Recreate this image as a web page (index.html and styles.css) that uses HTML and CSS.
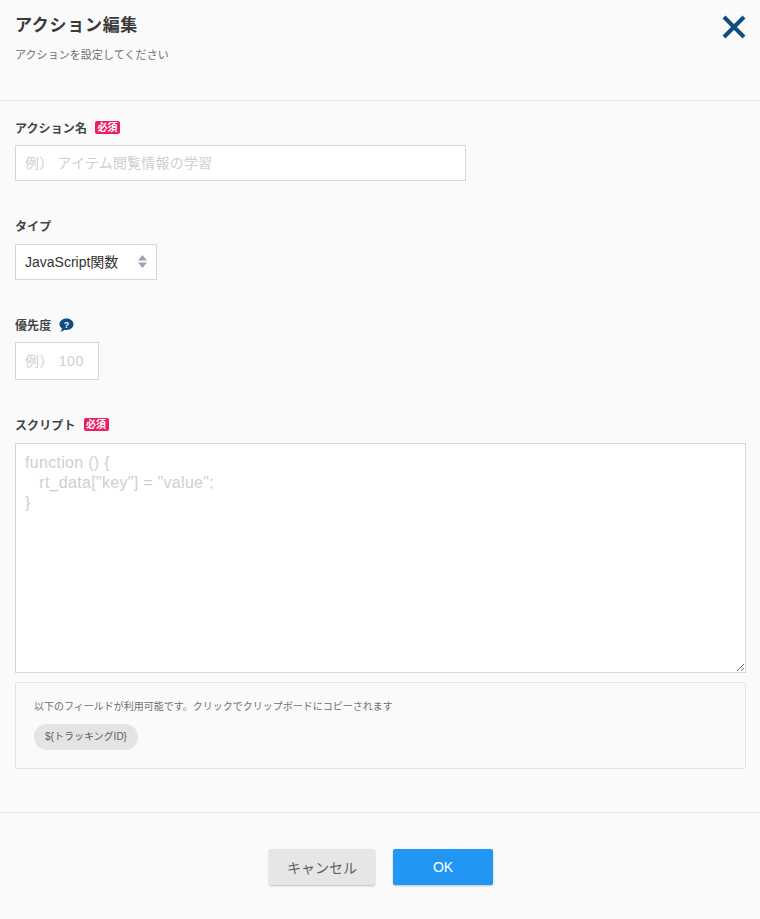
FILE: index.html
```html
<!DOCTYPE html>
<html lang="ja">
<head>
    <meta charset="UTF-8">
    <title>アクション編集</title>
    <link rel="stylesheet" href="styles.css">
</head>
<body>
    <div class="modal">
        <header class="modal-header">
            <div>
                <h1>アクション編集</h1>
                <p class="subtitle">アクションを設定してください</p>
            </div>
            <button class="close-btn" aria-label="閉じる">
                <svg width="26" height="26" viewBox="0 0 26 26">
                    <path d="M3 3 L23 23 M23 3 L3 23" stroke="#0f4c81" stroke-width="4" fill="none"/>
                </svg>
            </button>
        </header>

        <div class="modal-body">
            <div class="field field-name">
                <label class="field-label">アクション名 <span class="required">必須</span></label>
                <input class="input input-name" type="text" placeholder="例） アイテム閲覧情報の学習">
            </div>

            <div class="field field-type">
                <label class="field-label">タイプ</label>
                <div class="select-wrap">
                    <select class="input select">
                        <option>JavaScript関数</option>
                    </select>
                    <svg class="select-arrows" width="9" height="13" viewBox="0 0 9 13">
                        <path d="M4.5 0 L9 5.5 L0 5.5 Z M0 7.5 L9 7.5 L4.5 13 Z" fill="#9aa5b1"/>
                    </svg>
                </div>
            </div>

            <div class="field field-priority">
                <label class="field-label">優先度
                    <svg class="help-icon" width="15" height="14" viewBox="0 0 15 14">
                        <path d="M7.5 0.5 C11.4 0.5 14.5 3 14.5 6.2 C14.5 9.4 11.4 11.9 7.5 11.9 C6.8 11.9 6.2 11.8 5.6 11.7 C4.6 12.8 3 13.5 1.5 13.5 C2.4 12.6 2.9 11.5 3 10.4 C1.4 9.4 0.5 7.9 0.5 6.2 C0.5 3 3.6 0.5 7.5 0.5 Z" fill="#0f4c81"/>
                        <text x="7.5" y="9.6" class="help-mark">?</text>
                    </svg>
                </label>
                <input class="input input-priority" type="text" placeholder="例） 100">
            </div>

            <div class="field field-script">
                <label class="field-label">スクリプト <span class="required">必須</span></label>
                <textarea class="input textarea" placeholder="function () {
   rt_data[&quot;key&quot;] = &quot;value&quot;;
}"></textarea>
            </div>

            <div class="fields-box">
                <p>以下のフィールドが利用可能です。クリックでクリップボードにコピーされます</p>
                <span class="chip">${トラッキングID}</span>
            </div>
        </div>

        <footer class="modal-footer">
            <button class="btn btn-cancel">キャンセル</button>
            <button class="btn btn-ok">OK</button>
        </footer>
    </div>
</body>
</html>
```

FILE: styles.css
```css
* {
    box-sizing: border-box;
}
body {
    margin: 0;
    background-color: #fafafa;
    color: #333;
    font-family: 'Liberation Sans', 'Noto Sans CJK JP', sans-serif;
    overflow: hidden;
}
.modal {
    width: 760px;
    height: 919px;
}
.modal-header {
    display: flex;
    justify-content: space-between;
    align-items: flex-start;
    height: 101px;
    padding: 14px 13px 0 15px;
    border-bottom: 1px solid #e4e4e4;
}
h1 {
    margin: 0;
    font-size: 17px;
    line-height: 24px;
    font-weight: 700;
    letter-spacing: 0.7px;
    color: #3a3a3a;
}
.subtitle {
    margin: 9px 0 0;
    font-size: 11px;
    line-height: 16px;
    letter-spacing: 0.07px;
    color: #707070;
}
.close-btn {
    padding: 0;
    border: none;
    background: none;
    cursor: pointer;
}
.modal-body {
    padding: 19px 14px 0 15px;
}
.field-label {
    display: flex;
    align-items: center;
    gap: 8px;
    height: 15px;
    font-size: 12px;
    font-weight: 700;
    letter-spacing: 0.1px;
    color: #444;
}
.required {
    display: inline-block;
    padding: 0 2.5px;
    height: 13px;
    line-height: 13px;
    font-size: 10px;
    font-weight: 700;
    letter-spacing: 0;
    color: #fff;
    background-color: #e91e63;
    border-radius: 2px;
}
.input {
    display: block;
    border: 1px solid #d6d6d6;
    background-color: #fff;
    font-family: inherit;
    font-size: 14px;
    color: #333;
    padding: 0 9px;
    border-radius: 0;
    outline: none;
}
.input::placeholder {
    color: #cfcfcf;
    opacity: 1;
}
.field-name .input {
    margin-top: 10px;
}
.input-name {
    width: 451px;
    height: 36px;
    letter-spacing: 0.2px;
}
.field-type {
    margin-top: 37px;
}
.select-wrap {
    position: relative;
    width: 142px;
    margin-top: 11px;
}
.select {
    width: 100%;
    height: 36px;
    appearance: none;
}
.select-arrows {
    position: absolute;
    top: 11px;
    right: 10px;
}
.field-priority {
    margin-top: 37px;
}
.help-mark {
    font-size: 9px;
    font-weight: 700;
    fill: #fff;
    text-anchor: middle;
}
.input-priority {
    width: 84px;
    height: 38px;
    margin-top: 10px;
    letter-spacing: 0.6px;
}
.field-script {
    margin-top: 37px;
}
.textarea {
    width: 731px;
    height: 230px;
    margin-top: 11px;
    padding: 9px;
    font-size: 16px;
    line-height: 20px;
    letter-spacing: 0.3px;
}
.fields-box {
    width: 731px;
    height: 87px;
    margin-top: 9px;
    padding: 17px 18px;
    border: 1px solid #e4e4e4;
    border-radius: 2px;
}
.fields-box p {
    margin: 0;
    font-size: 10px;
    line-height: 14px;
    color: #707070;
}
.chip {
    display: inline-block;
    height: 26px;
    margin-top: 10px;
    padding: 0 11px;
    line-height: 26px;
    font-size: 10px;
    color: #606060;
    background-color: #e4e4e4;
    border-radius: 13px;
}
.modal-footer {
    display: flex;
    justify-content: center;
    gap: 18px;
    margin-top: 43px;
    padding: 36px 0 0 2px;
    border-top: 1px solid #e4e4e4;
}
.btn {
    height: 36px;
    border: none;
    border-radius: 2px;
    font-family: inherit;
    font-size: 14px;
    cursor: pointer;
    box-shadow: 0 1px 2px rgba(0, 0, 0, 0.25);
}
.btn-cancel {
    width: 106px;
    background-color: #e6e6e6;
    color: #606060;
}
.btn-ok {
    width: 100px;
    background-color: #2196f3;
    color: #fff;
}
```
